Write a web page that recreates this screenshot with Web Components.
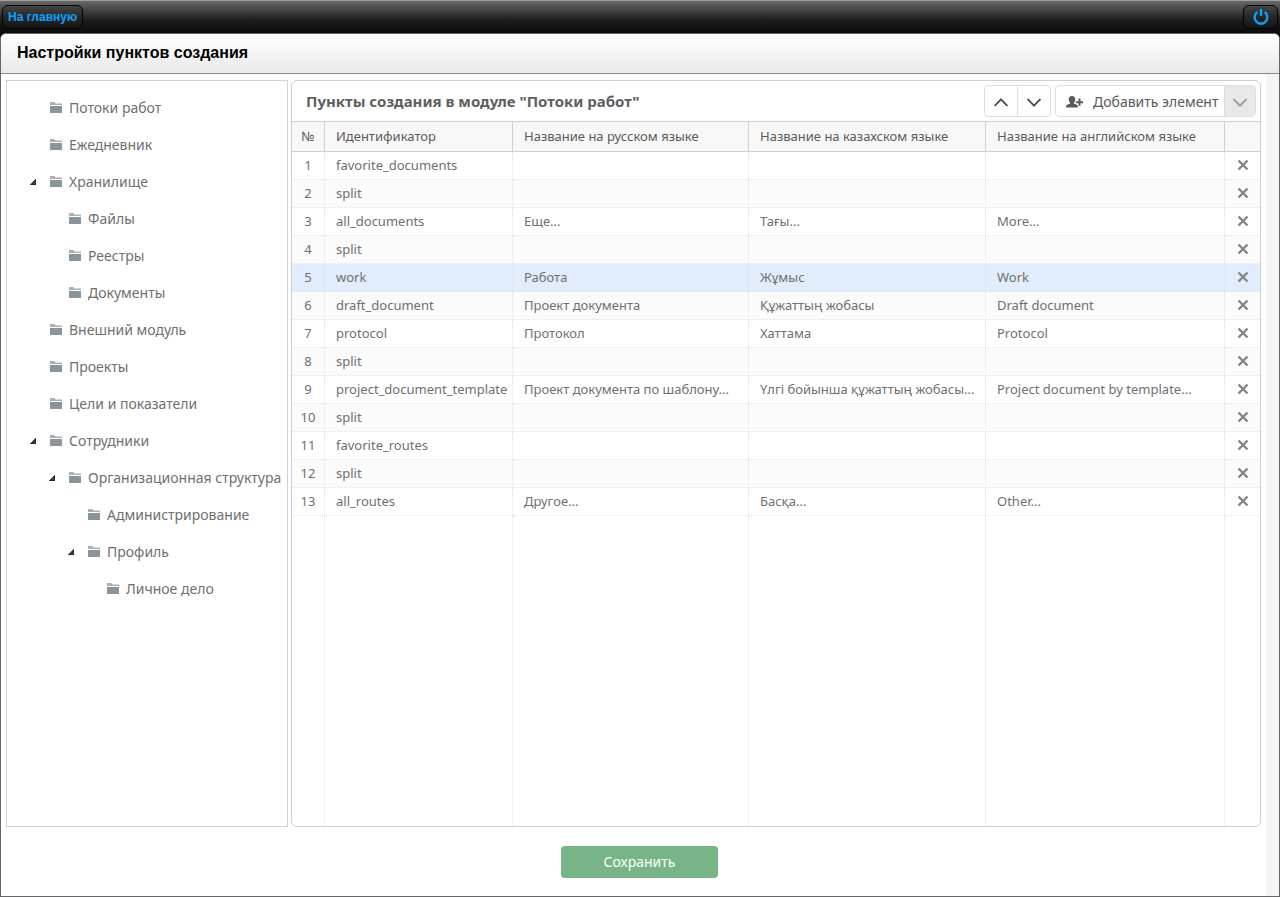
<!DOCTYPE html>
<html lang="ru">
<head>
<meta charset="utf-8">
<meta name="viewport" content="width=device-width, initial-scale=1">
<title>Настройки пунктов создания</title>
<style>
  html, body { margin: 0; height: 100%; }
  body { font-family: "Noto Sans", "Open Sans", sans-serif; font-size: 14px; color: #6f6f6f; background: #66666a; }
</style>
</head>
<body>
<app-shell>
  <top-bar slot="bar"></top-bar>
  <page-title slot="title">Настройки пунктов создания</page-title>
  <module-tree slot="side">
    <tree-item>Потоки работ</tree-item>
    <tree-item>Ежедневник</tree-item>
    <tree-item open>Хранилище
      <tree-item slot="children">Файлы</tree-item>
      <tree-item slot="children">Реестры</tree-item>
      <tree-item slot="children">Документы</tree-item>
    </tree-item>
    <tree-item>Внешний модуль</tree-item>
    <tree-item>Проекты</tree-item>
    <tree-item>Цели и показатели</tree-item>
    <tree-item open>Сотрудники
      <tree-item slot="children" open>Организационная структура
        <tree-item slot="children">Администрирование</tree-item>
        <tree-item slot="children" open>Профиль
          <tree-item slot="children">Личное дело</tree-item>
        </tree-item>
      </tree-item>
    </tree-item>
  </module-tree>
  <items-panel slot="content">
    <span slot="heading">Пункты создания в модуле "Потоки работ"</span>
    <move-buttons slot="tools"></move-buttons>
    <split-button slot="tools">Добавить элемент</split-button>
    <items-table></items-table>
  </items-panel>
  <save-button slot="footer">Сохранить</save-button>
</app-shell>

<script>
function define(name, html, init) {
  const template = document.createElement('template');
  template.innerHTML = html;
  customElements.define(name, class extends HTMLElement {
    constructor() {
      super();
      this.attachShadow({ mode: 'open' }).append(template.content.cloneNode(true));
      if (init) init(this.shadowRoot, this);
    }
  });
}

define('app-shell', `
  <style>
    :host { display: flex; flex-direction: column; min-height: 100%; box-sizing: border-box; background: #0c0c0c; }
    .window { flex: 1; display: flex; flex-direction: column; border: 1px solid #66666a; border-radius: 6px 6px 0 0; background: #fff; overflow: hidden; }
    .page { flex: 1; display: flex; background: #f5f5f5; }
    .body { flex: 1; min-width: 0; display: flex; flex-direction: column; margin-right: 13px; padding: 6px 5px 18px; box-sizing: border-box; background: #fff; }
    .columns { flex: 1; display: grid; grid-template-columns: 282px minmax(0, 1fr); gap: 3px; }
    footer { display: flex; justify-content: center; padding: 19px 0 0 12px; }
  </style>
  <slot name="bar"></slot>
  <div class="window">
    <slot name="title"></slot>
    <div class="page">
      <main class="body">
        <div class="columns"><slot name="side"></slot><slot name="content"></slot></div>
        <footer><slot name="footer"></slot></footer>
      </main>
    </div>
  </div>`);

define('top-bar', `
  <style>
    :host { display: flex; justify-content: space-between; align-items: center; height: 33px; box-sizing: border-box; padding: 0 2px; border-top: 1px solid #a0a0a0; background: linear-gradient(#686868, #3c3c3c 35%, #1c1c1c 60%, #0c0c0c); }
    a, button { box-sizing: border-box; height: 24px; border: 1px solid #000; border-radius: 6px; background: linear-gradient(#444, #292929 45%, #141414); }
    a { display: flex; align-items: center; padding: 0 5px; font: bold 12px "Liberation Sans", Arial, sans-serif; color: #08a4ff; text-decoration: none; }
    button { display: grid; place-items: center; width: 35px; padding: 0; }
  </style>
  <a href="#">На главную</a>
  <button type="button" aria-label="Выход">
    <svg width="18" height="18" viewBox="0 0 18 18" fill="none" stroke="#08a4f5" stroke-width="2.4"><path d="M5.400 4A6.400 6.400 0 1 0 12.600 4M9 1v7"/></svg>
  </button>`);

define('page-title', `
  <style>
    :host { display: flex; align-items: center; height: 40px; box-sizing: border-box; padding: 0 16px 2px; border-bottom: 1px solid #888; background: linear-gradient(#fff, #e9e9e9); }
    h1 { margin: 0; font: bold 16px "Liberation Sans", Arial, sans-serif; color: #000; }
  </style>
  <h1><slot></slot></h1>`);

define('module-tree', `
  <style>
    :host { display: block; box-sizing: border-box; padding: 8px 0 8px 23px; border: 1px solid #d2d2d2; background: #fff; }
  </style>
  <slot></slot>`);

define('tree-item', `
  <style>
    :host { display: block; }
    .row { display: flex; align-items: center; height: 37px; white-space: nowrap; }
    .toggle { width: 20px; height: 6px; }
    .toggle svg { display: none; }
    :host([open]) .toggle svg { display: block; }
    .folder { flex: none; margin-right: 7px; }
    .children { padding-left: 19px; }
  </style>
  <div class="row">
    <span class="toggle"><svg width="6" height="6" viewBox="0 0 6 6"><path d="M6 0V6H0Z" fill="#3f3f42"/><path d="M5.6 .5V5.6H.6Z" fill="none" stroke="#222" stroke-width=".8"/></svg></span>
    <svg class="folder" width="12" height="11" viewBox="0 0 12 11"><path d="M0 0H4.4L5.4 1.4H12V3H0Z" fill="#a9b1b6"/><path d="M0 4H12V11H0Z" fill="#8a949b"/></svg>
    <span><slot></slot></span>
  </div>
  <div class="children"><slot name="children"></slot></div>`);

define('items-panel', `
  <style>
    :host { display: flex; flex-direction: column; box-sizing: border-box; min-width: 0; border: 1px solid #d0d0d0; border-radius: 6px; background: #fff; overflow: hidden; }
    header { display: flex; align-items: center; gap: 4px; height: 40px; padding: 0 4px 0 14px; }
    h2 { flex: 1; margin: 0; font-size: 15px; font-weight: bold; color: #5f5f5f; white-space: nowrap; }
    .fill { flex: 1; display: grid; }
  </style>
  <header><h2><slot name="heading"></slot></h2><slot name="tools"></slot></header>
  <div class="fill"><slot></slot></div>`);

define('move-buttons', `
  <style>
    :host { display: flex; box-sizing: border-box; width: 67px; height: 32px; border: 1px solid #ddd; border-radius: 4px; }
    button { flex: 1; display: grid; place-items: center; padding: 2px 0 0; border: 0; background: none; }
    button + button { border-left: 1px solid #ddd; }
  </style>
  <button type="button" aria-label="Вверх"><svg width="14" height="9" viewBox="0 0 14 9" fill="none" stroke="#4c4c4c" stroke-width="1.8"><path d="M.6 8 7 1.300 13.400 8"/></svg></button>
  <button type="button" aria-label="Вниз"><svg width="14" height="9" viewBox="0 0 14 9" fill="none" stroke="#4c4c4c" stroke-width="1.8"><path d="M.6 1 7 7.700 13.400 1"/></svg></button>`);

define('split-button', `
  <style>
    :host { display: flex; box-sizing: border-box; height: 32px; border: 1px solid #ddd; border-radius: 4px; overflow: hidden; }
    button { display: flex; align-items: center; padding: 0; border: 0; background: none; font: inherit; color: #5a5a5a; }
    .main { width: 168px; gap: 9px; padding-left: 10px; box-sizing: border-box; white-space: nowrap; }
    .more { width: 31px; justify-content: center; padding-top: 2px; border-left: 1px solid #ddd; background: #e8e8e8; }
  </style>
  <button type="button" class="main">
    <svg width="18" height="14" viewBox="0 -2 18 14" fill="#5a5a5a"><path d="M6 0C8.200 0 9.300 1.300 9.300 3.300C9.300 4.800 8.700 6 7.900 6.700V7.500L10.800 8.700C11.700 9.100 12 9.800 12 11.500H0C0 9.800 .3 9.100 1.200 8.700L4.100 7.500V6.700C3.300 6 2.700 4.800 2.700 3.300C2.700 1.300 3.800 0 6 0Z"/><path d="M12.500 2.600H14.500V5.200H17V7.200H14.500V9.800H12.500V7.200H9.900V5.200H12.500Z"/></svg>
    <slot></slot>
  </button>
  <button type="button" class="more" aria-label="Ещё действия"><svg width="14" height="9" viewBox="0 0 14 9" fill="none" stroke="#999" stroke-width="1.8"><path d="M.6 1 7 7.700 13.400 1"/></svg></button>`);

const rows = [
  ['favorite_documents'],
  ['split'],
  ['all_documents', 'Еще...', 'Тағы...', 'More...'],
  ['split'],
  ['work', 'Работа', 'Жұмыс', 'Work'],
  ['draft_document', 'Проект документа', 'Құжаттың жобасы', 'Draft document'],
  ['protocol', 'Протокол', 'Хаттама', 'Protocol'],
  ['split'],
  ['project_document_template', 'Проект документа по шаблону...', 'Үлгі бойынша құжаттың жобасы...', 'Project document by template...'],
  ['split'],
  ['favorite_routes'],
  ['split'],
  ['all_routes', 'Другое...', 'Басқа...', 'Other...']
];
const selectedRow = 5;

define('items-table', `
  <style>
    :host { display: grid; }
    table { width: 100%; height: 100%; table-layout: fixed; border-collapse: separate; border-spacing: 0; font-size: 13px; }
    .num { width: 33px; } .id { width: 188px; } .ru { width: 236px; } .kk { width: 237px; } .del { width: 35px; }
    th, td { box-sizing: border-box; padding: 0 0 2px 11px; text-align: left; line-height: 18px; white-space: nowrap; }
    th { height: 31px; border: solid #d0d0d0; border-width: 1px 1px 1px 0; background: #f8f8f8; font-weight: normal; color: #5a5a5a; }
    td { border: dotted #e2e2e2; border-width: 0 1px 1px 0; }
    .item td { height: 28px; }
    tr > :first-child { padding-left: 0; text-align: center; }
    tr > :last-child { padding-left: 0; border-right: 0; }
    .fill td { border-bottom: 0; }
    .item:nth-child(even) td { background: #fbfbfb; }
    .item.selected td { background: #e1edfd; }
    button { display: grid; place-items: center; width: 100%; height: 24px; padding: 0; border: 0; background: none; }
  </style>
  <table>
    <colgroup><col class="num"><col class="id"><col class="ru"><col class="kk"><col><col class="del"></colgroup>
    <thead><tr><th>№</th><th>Идентификатор</th><th>Название на русском языке</th><th>Название на казахском языке</th><th>Название на английском языке</th><th></th></tr></thead>
    <tbody></tbody>
  </table>`, root => {
  const cross = '<button type="button" aria-label="Удалить"><svg width="12" height="12" viewBox="0 0 12 12" fill="none" stroke="#858585" stroke-width="2.400"><path d="M1.500 1.500 10.500 10.500M10.500 1.500 1.500 10.500"/></svg></button>';
  root.querySelector('tbody').innerHTML = rows.map(([id, ru = '', kk = '', en = ''], i) =>
    `<tr class="item${i + 1 === selectedRow ? ' selected' : ''}"><td>${i + 1}</td><td>${id}</td><td>${ru}</td><td>${kk}</td><td>${en}</td><td>${cross}</td></tr>`
  ).join('') + '<tr class="fill"><td></td><td></td><td></td><td></td><td></td><td></td></tr>';
});

define('save-button', `
  <style>
    :host { display: block; }
    button { width: 157px; height: 32px; padding: 0 0 2px; border: 0; border-radius: 4px; background: #77b588; color: #fff; font: inherit; }
  </style>
  <button type="submit"><slot></slot></button>`);
</script>
</body>
</html>
